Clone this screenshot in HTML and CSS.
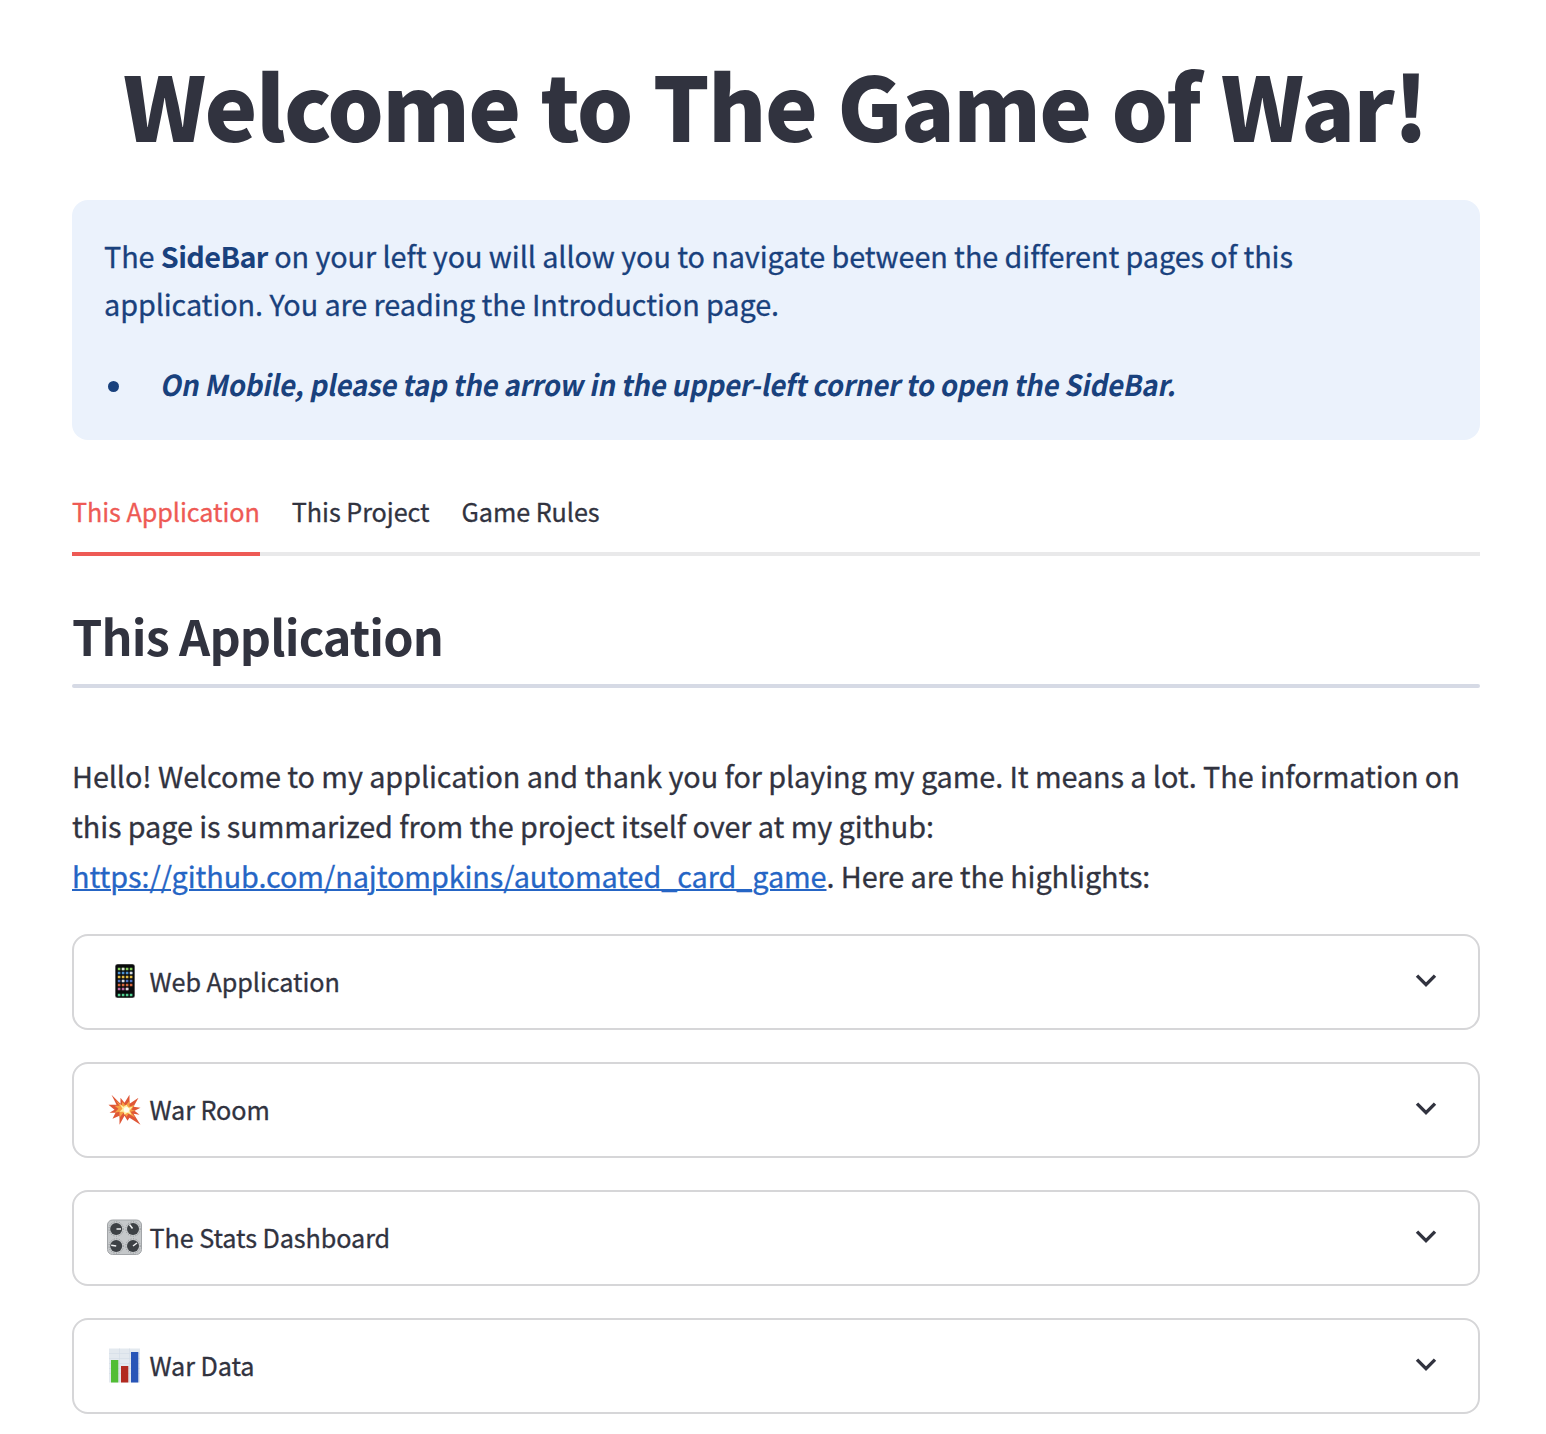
FILE: index.html
```html
<!DOCTYPE html>
<html lang="en">
<head>
<meta charset="utf-8">
<title>The Game of War</title>
<link rel="stylesheet" href="styles.css">
</head>
<body>
<main class="page">
  <h1 class="title"><span>Welcome to The Game of War!</span></h1>

  <section class="alert">
    <p><span>The <strong>SideBar</strong> on your left you will allow you to navigate between the different pages of this</span><br><span>application. You are reading the Introduction page.</span></p>
    <ul>
      <li><span class="mobile-note">On Mobile, please tap the arrow in the upper-left corner to open the SideBar.</span></li>
    </ul>
  </section>

  <nav class="tabs">
    <a class="tab tab-active">This Application</a>
    <a class="tab">This Project</a>
    <a class="tab">Game Rules</a>
  </nav>

  <h2 class="heading"><span>This Application</span></h2>
  <div class="divider"></div>

  <p class="body-text"><span>Hello! Welcome to my application and thank you for playing my game. It means a lot. The information on</span><br><span>this page is summarized from the project itself over at my github:</span><br><a class="link">https://github.com/najtompkins/automated_card_game</a><span>. Here are the highlights:</span></p>

  <div class="expanders">
    <div class="expander">
      <svg class="emoji" viewBox="0 0 36 36">
        <rect x="8" y="1" width="20" height="34" rx="2.5" fill="#777"/>
        <rect x="8.8" y="1.5" width="18.4" height="33" rx="2" fill="#08090b"/>
        <g stroke-width="2.4" stroke-dasharray="2.6 1.4" fill="none">
          <path d="M10.8 6h15" stroke="#86cf5b"/>
          <path d="M10.8 10h15" stroke="#4b91d0"/>
          <path d="M10.8 14h15" stroke="#e2bb45"/>
          <path d="M10.8 18h15" stroke="#5275c5"/>
          <path d="M10.8 22h15" stroke="#d4653d"/>
          <path d="M10.8 26h11" stroke="#bd6ca5"/>
          <path d="M10.8 32h15" stroke="#52cf91"/>
        </g>
        <g fill="#ddd"><rect x="14.8" y="4.8" width="2.6" height="2.4"/><rect x="22.8" y="8.8" width="2.6" height="2.4"/><rect x="14.8" y="16.8" width="2.6" height="2.4"/><rect x="18.8" y="24.8" width="2.6" height="2.4"/></g>
      </svg>
      <span class="label">Web Application</span>
      <svg class="chevron" viewBox="0 0 24 24"><path d="M3 6.6l9 9 9-9"/></svg>
    </div>
    <div class="expander">
      <svg class="emoji" viewBox="0 0 36 36">
        <g transform="translate(.5 1.8)">
          <path d="M4 2l9 9 0-6 4 5 5-8 0 9 9-6-5 9 7 1-6 3 5 4-6-1 7 11-11-7-2 3-3-5-5 9 0-9-7 3 3-6-6 0 5-3-6-5 8 0z" fill="#df5737"/>
          <path d="M8 7l6 6 1-4 3 4 4-5 0 6 5-2-3 5 4 1-5 1 5 6-7-4-2 3-3-4-4 5 0-6-5 1 4-4-4-3 5 0z" fill="#f7a044"/>
          <path d="M12 11l4 3 3-2 2 3 4-1-3 4 2 4-4-2-3 2-1-3-4 0 3-3z" fill="#fff1a4"/>
          <circle cx="19" cy="17" r="2.7" fill="#fffef1"/>
        </g>
      </svg>
      <span class="label">War Room</span>
      <svg class="chevron" viewBox="0 0 24 24"><path d="M3 6.6l9 9 9-9"/></svg>
    </div>
    <div class="expander">
      <svg class="emoji" viewBox="0 0 36 36">
        <rect x=".5" y="1" width="34" height="34.5" rx="5" fill="#c5c8ca" stroke="#a2a5a8"/>
        <g fill="none" stroke="#8c8f92" stroke-dasharray="1 1.6"><circle cx="9.2" cy="10" r="7.2"/><circle cx="26" cy="10" r="7.2"/><circle cx="9.2" cy="27" r="7.2"/><circle cx="26" cy="27" r="7.2"/></g>
        <g fill="#3d4145"><circle cx="9.2" cy="10" r="6"/><circle cx="26" cy="10" r="6"/><circle cx="9.2" cy="27" r="6"/><circle cx="26" cy="27" r="6"/></g>
        <path d="M9.5 10h4.5M25.5 9.5l-3-4M9.2 27l-5-.7M26 27l4-3" stroke="#f1f2f3" stroke-width="1.5"/>
      </svg>
      <span class="label">The Stats Dashboard</span>
      <svg class="chevron" viewBox="0 0 24 24"><path d="M3 6.6l9 9 9-9"/></svg>
    </div>
    <div class="expander">
      <svg class="emoji" viewBox="0 0 36 36">
        <rect x="2" y="1.5" width="31" height="34" fill="#e3e9ef"/>
        <path d="M2 6.5h31M2 11.5h31M2 16.5h31M2 21.5h31M2 26.5h31M12.5 1.5v34M22.5 1.5v34" stroke="#d2dce5" stroke-width=".6"/>
        <path d="M4 13h7.3v22.5H4z" fill="#52bd35"/>
        <path d="M14 19h7.3v16.5H14z" fill="#b22a20"/>
        <path d="M24 5h7.3v30.5H24z" fill="#2855b7"/>
      </svg>
      <span class="label">War Data</span>
      <svg class="chevron" viewBox="0 0 24 24"><path d="M3 6.6l9 9 9-9"/></svg>
    </div>
  </div>
</main>
</body>
</html>
```
FILE: styles.css
```css
* { box-sizing: border-box; }

body {
  margin: 0;
  background: #fff;
  color: #31333f;
  font-family: "Noto Sans CJK SC", "Noto Sans", sans-serif;
}

h1, h2, p, ul { margin: 0; padding: 0; }

.page { padding: 44px 66px 20px 72px; }

.title {
  padding-right: 2px;
  font-size: 89px;
  line-height: 120px;
  font-weight: 900;
  letter-spacing: -1.63px;
  word-spacing: 2.2px;
  text-align: center;
  white-space: nowrap;
}

.alert {
  margin-top: 36px;
  padding: 32px;
  height: 240px;
  border-radius: 16px;
  background: #ebf2fc;
  color: #19417d;
  font-size: 28.8px;
  line-height: 48px;
  letter-spacing: -0.08px;
  -webkit-text-stroke: 0.3px currentColor;
  white-space: nowrap;
}

.alert strong { letter-spacing: -0.6px; -webkit-text-stroke: 0; }

.alert ul { margin-top: 32px; list-style: none; }

.alert li {
  display: flex;
  align-items: center;
  font-weight: 700;
  -webkit-text-stroke: 0;
}

.alert li::before {
  content: "";
  width: 11px;
  height: 11px;
  margin: 4px 43px 0 4px;
  border-radius: 50%;
  background: #19417d;
}

/* narrow, gently slanted face for the note */
.mobile-note {
  display: inline-block;
  letter-spacing: -0.19px;
  transform: skewX(-11deg) scaleX(0.955);
  transform-origin: left center;
}

.tabs {
  display: flex;
  gap: 32px;
  height: 84px;
  margin-top: 32px;
  box-shadow: inset 0 -4px #e9e9ea;
  font-size: 25.2px;
  line-height: 78px;
  letter-spacing: -0.06px;
  -webkit-text-stroke: 0.3px currentColor;
  white-space: nowrap;
}

.tab-active { color: #ee5a55; border-bottom: 4px solid #ee5a55; }

.heading {
  height: 128px;
  padding-top: 46px;
  font-size: 48.6px;
  line-height: 66px;
  font-weight: 700;
  letter-spacing: -0.85px;
}

.divider { height: 4px; border-radius: 2px; background: #d6dae5; }

.body-text {
  margin-top: 63px;
  font-size: 28.8px;
  line-height: 50px;
  letter-spacing: -0.078px;
  -webkit-text-stroke: 0.3px currentColor;
  white-space: nowrap;
}

.link { color: #2565c5; text-decoration: underline; text-decoration-thickness: 2px; }

.expanders { display: grid; gap: 32px; margin-top: 33px; }

.expander {
  display: flex;
  align-items: center;
  height: 96px;
  padding: 0 40px 2px 33px;
  border: 2px solid #d6d6d8;
  border-radius: 16px;
  font-size: 25.2px;
  line-height: 36px;
  letter-spacing: -0.07px;
  -webkit-text-stroke: 0.3px currentColor;
}

.emoji { width: 36px; height: 36px; margin-right: 6.5px; }

.chevron { width: 24px; height: 24px; margin-left: auto; }

.chevron path { fill: none; stroke: #31333f; stroke-width: 3.4; }
```
